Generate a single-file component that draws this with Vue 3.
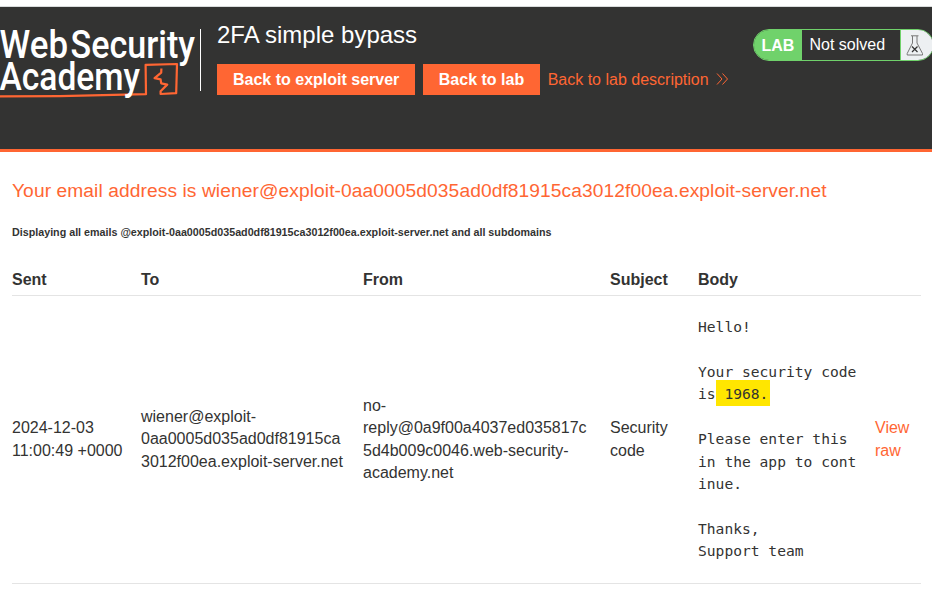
<script setup>
const columns = ['Sent', 'To', 'From', 'Subject', 'Body', '']
const intro = 'Hello!\n\nYour security code\nis'
const outro = '\n\nPlease enter this\nin the app to cont\ninue.\n\nThanks,\nSupport team'
</script>

<template>
  <div class="page">
    <header class="banner">
      <svg class="logo" width="201" height="96" viewBox="0 0 201 96">
        <text class="logo-text" x="-0.5" y="50.5" textLength="68.5" lengthAdjust="spacingAndGlyphs">Web</text>
        <text class="logo-text" x="70.5" y="50.5" textLength="124.5" lengthAdjust="spacingAndGlyphs">Security</text>
        <path class="mark" d="M0 89.3 L60 89.2 L146 87.2 L145.6 57.8 L177 57 L176.2 86.2 L160.6 87 L160.6 84.2 L167.2 77.6 L161.2 76.4 L160.6 72.4 L154.6 71.2 L161.2 65.600 L161.4 61.5" />
        <text class="logo-text" x="-0.5" y="83" textLength="140.5" lengthAdjust="spacingAndGlyphs">Academy</text>
        <path class="divider" d="M200.5 22V84" />
      </svg>
      <div class="title-block">
        <h2>2FA simple bypass</h2>
        <nav class="actions">
          <a class="button">Back to exploit server</a>
          <a class="button short">Back to lab</a>
          <a class="link">Back to lab description
            <svg width="13" height="12" viewBox="0 0 13 12"><path d="M1 .5 6 6 1 11.5M6.500 .5 11.500 6 6.500 11.500" /></svg>
          </a>
        </nav>
      </div>
      <div class="status">
        <span class="lab">LAB</span>
        <span class="state">Not solved</span>
        <span class="flask">
          <svg width="18" height="21" viewBox="0 0 18 21">
            <path d="M5 .8H12.500M6.500 1V8L1.200 18.500V20H16.500V18.500L11 8V1" />
            <path class="cross" d="M6 11.500 11.500 17M11.500 11.500 6 17" />
          </svg>
        </span>
      </div>
    </header>
    <main>
      <h4>Your email address is wiener@exploit-0aa0005d035ad0df81915ca3012f00ea.exploit-server.net</h4>
      <h6>Displaying all emails @exploit-0aa0005d035ad0df81915ca3012f00ea.exploit-server.net and all subdomains</h6>
      <div class="grid head">
        <span v-for="c in columns" :key="c">{{ c }}</span>
      </div>
      <div class="grid row">
        <div>2024-12-03<br>11:00:49 +0000</div>
        <div>wiener@exploit-<br>0aa0005d035ad0df81915ca<br>3012f00ea.exploit-server.net</div>
        <div>no-<br>reply@0a9f00a4037ed035817c<br>5d4b009c0046.web-security-<br>academy.net</div>
        <div>Security<br>code</div>
        <pre>{{ intro }}<mark> 1968.</mark>{{ outro }}</pre>
        <a>View<br>raw</a>
      </div>
    </main>
  </div>
</template>

<style>
body { background: #fff; overflow: hidden; }
</style>

<style scoped>
.page {
  width: 932px;
  height: 589px;
  overflow: hidden;
  box-sizing: border-box;
  padding-top: 6px;
  background: #fff;
  color: #333332;
  font: 16px/22.4px "Liberation Sans", Arial, sans-serif;
}
.banner {
  display: flex;
  box-sizing: border-box;
  height: 146px;
  background: #333332;
  border-top: 1px solid #d9dcdc;
  border-bottom: 3px solid #ff6633;
}
.logo { flex: none; overflow: visible; }
.logo-text { font: 500 38px Roboto, sans-serif; fill: #fff; }
.mark { fill: none; stroke: #ff6633; stroke-width: 2.2; stroke-linejoin: round; }
.divider { stroke: #fff; stroke-width: 1; }
.title-block { margin-left: 16px; padding-top: 13px; flex: 1; }
h2 { margin: 0; color: #fff; font-size: 24px; font-weight: 400; line-height: 30px; }
.actions { display: flex; gap: 8px; margin-top: 14px; white-space: nowrap; }
.button { padding: 0 16px; height: 31px; line-height: 31px; background: #ff6633; color: #fff; font-weight: 700; }
.short { padding: 0 15.5px; }
.link { color: #ff6633; line-height: 31px; }
.link svg { margin-left: 3px; fill: none; stroke: #ff6633; stroke-width: 1; }
.status {
  display: flex;
  flex: none;
  box-sizing: border-box;
  width: 181px;
  height: 32px;
  margin: 22px -2px 0 0;
  border: 1px solid #70d26b;
  border-radius: 16px;
  overflow: hidden;
  color: #fff;
  line-height: 30px;
  white-space: nowrap;
}
.lab { width: 48px; box-sizing: border-box; padding: 1px 0 0 7.5px; background: #70d26b; font-weight: 700; }
.state { width: 99px; box-sizing: border-box; padding-left: 7.5px; border-right: 1px solid #70d26b; }
.flask { flex: 1; background: #edf0f2; padding: 5px 0 0 5px; line-height: 0; }
.flask svg { fill: none; stroke: #777; stroke-width: 1; }
.flask .cross { stroke: #333; stroke-width: 1.2; }
main { padding: 0 11px 0 12px; }
h4 { margin: 27px 0 0; color: #ff6633; font-size: 19.2px; letter-spacing: .085px; font-weight: 400; line-height: 24px; white-space: nowrap; }
h6 { margin: 21px 0 0; font-size: 10.72px; line-height: 16px; white-space: nowrap; }
.grid {
  display: grid;
  grid-template-columns: 129px 222px 247px 88px 177px 1fr;
  align-items: center;
  border-bottom: 1px solid #e4e4e4;
}
.head { height: 29px; padding-top: 4px; margin-top: 22px; font-weight: 700; }
.row { height: 287px; }
pre { margin: 0; font: 14.62px/22.4px "DejaVu Sans Mono", monospace; }
mark { position: relative; z-index: 0; color: inherit; background: none; }
mark::before {
  content: "";
  position: absolute;
  z-index: -1;
  inset: -5px -2px -4px 0;
  background: #ffe600;
}
.row a { color: #ff6633; }
</style>
